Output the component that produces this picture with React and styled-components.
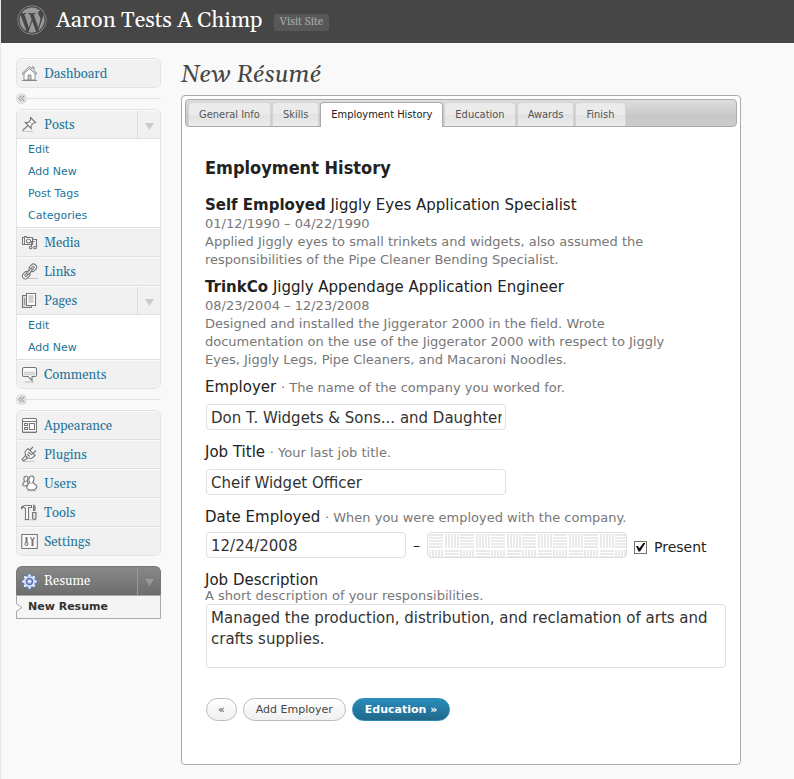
import React from "react";
import styled, { createGlobalStyle, css } from "styled-components";
import { FaWordpress } from "react-icons/fa";

const sans = `"DejaVu Sans", Verdana, sans-serif`;
const condensed = `"DejaVu Sans Condensed", "DejaVu Sans", sans-serif`;
const serif = `Gelasio, Georgia, "Liberation Serif", serif`;

const GlobalStyle = createGlobalStyle`
  * { box-sizing: border-box; }
  body { margin: 0; background: #f9f9f9; color: #333; font-family: ${sans}; font-size: 13px; }
  h1, h2, h3, p, ul { margin: 0; padding: 0; }
  ul { list-style: none; }
  a { text-decoration: none; }
`;

const Page = styled.div`
  min-height: 100vh;
  border-left: 1px solid #e9e6e1;
`;

const Header = styled.header`
  display: flex;
  align-items: center;
  height: 43px;
  padding: 0 16px 3px;
  background: #464646;
`;

const Logo = styled(FaWordpress)`
  width: 30px;
  height: 30px;
  color: #999;
  flex: none;
`;

const SiteTitle = styled.h1`
  margin-left: 9px;
  padding-top: 2px;
  color: #fff;
  font: 400 22px/30px ${serif};
`;

const VisitSite = styled.a`
  margin: 5px 0 0 11px;
  padding: 0 6px;
  border-radius: 3px;
  background: #585858;
  color: #aaa;
  font: 400 11px/17px ${serif};
`;

const Body = styled.div`
  display: flex;
  align-items: flex-start;
  gap: 20px;
  padding: 15px 53px 16px 15px;
`;

const Sidebar = styled.nav`
  flex: 0 0 145px;
`;

const Group = styled.ul`
  border: 1px solid #e3e3e3;
  border-radius: 6px;
  overflow: hidden;
`;

const CurrentGroup = styled.div`
  margin-top: 10px;
`;

const MenuItem = styled.li`
  border-bottom: 1px solid #dfdfdf;
  &:last-child { border-bottom: 0; }
`;

const MenuRow = styled.div`
  display: flex;
  align-items: stretch;
  height: 28px;
  background: #f1f1f1;
  border-top: 1px solid #fafafa;
  ${(p) => p.$current && css`
    height: 29px;
    border: 1px solid #777;
    border-bottom: 0;
    border-radius: 6px 6px 0 0;
    background: linear-gradient(#888, #6d6d6d);
  `}
`;

const MenuLink = styled.a`
  flex: 1;
  display: flex;
  align-items: center;
  gap: 6px;
  padding-left: 4px;
  color: ${(p) => (p.$current ? "#fff" : "#21759b")};
  font: 400 13px/20px ${serif};
  svg { flex: none; }
`;

const Toggle = styled.button`
  width: 23px;
  padding: 3px 0 0;
  border: 0;
  border-left: 1px solid ${(p) => (p.$current ? "#999" : "#dfdfdf")};
  background: transparent;
  color: ${(p) => (p.$current ? "#999" : "#ccc")};
  line-height: 0;
`;

const Submenu = styled.ul`
  border-top: 1px solid #dfdfdf;
  background: #fff;
  ${(p) => p.$current && css`
    border: 1px solid #aaa;
    background: #f5f5f5;
  `}
`;

const SubLink = styled.a`
  display: block;
  padding-left: 11px;
  color: ${(p) => (p.$current ? "#333" : "#21759b")};
  font: ${(p) => (p.$current ? 700 : 400)} 11px/22px ${sans};
`;

const CurrentItem = styled.li`
  display: flex;
  align-items: center;
  svg { margin-left: -1px; margin-right: -6px; }
`;

const Separator = styled.div`
  display: flex;
  align-items: center;
  height: 21px;
  &::after { content: ""; flex: 1; height: 1px; background: #e3e3e3; }
`;

const Fold = styled.button`
  width: 11px;
  height: 11px;
  padding: 0;
  border: 0;
  border-radius: 50%;
  background: #e1e1e1;
  line-height: 0;
`;

const Main = styled.main`
  flex: 1;
  min-width: 0;
`;

const PageTitle = styled.h2`
  color: #464646;
  font: italic 400 24px/32px ${serif};
  padding-top: 1px;
  margin-bottom: 4px;
`;

const Panel = styled.section`
  min-height: 668px;
  padding: 3px;
  border: 1px solid #aaa;
  border-radius: 4px;
  background: #fff;
`;

const TabBar = styled.div`
  display: flex;
  align-items: stretch;
  gap: 1px;
  height: 28px;
  padding: 2px 2px 0;
  border: 1px solid #aaa;
  border-radius: 4px;
  background: linear-gradient(#dedede, #c8c8c8 60%, #ccc);
`;

const Tab = styled.button`
  padding: 0 10px;
  border: 1px solid #d3d3d3;
  border-bottom: 0;
  border-radius: 4px 4px 0 0;
  background: linear-gradient(#ebebeb 50%, #e2e2e2 50%, #ececec);
  color: #555;
  font: 400 11px/22px ${condensed};
  white-space: nowrap;
  ${(p) => p.$active && css`
    margin-bottom: -1px;
    padding-bottom: 1px;
    border-color: #aaa;
    background: #fff;
    color: #212121;
  `}
`;

const Form = styled.form`
  padding: 29px 10px 40px 20px;
`;

const FormTitle = styled.h3`
  color: #222;
  font: 700 18px/24px ${condensed};
  margin-bottom: 15px;
`;

const Job = styled.div`
  max-width: 485px;
  margin-bottom: 8px;
`;

const JobTitle = styled.p`
  color: #222;
  font-size: 15px;
  line-height: 20px;
`;

const JobText = styled.p`
  color: #777;
  font-size: 13px;
  line-height: 18px;
`;

const Field = styled.div`
  margin-bottom: ${(p) => (p.$last ? 0 : 12)}px;
`;

const Label = styled.label`
  display: block;
  margin-bottom: ${(p) => p.$space || 7}px;
  color: #222;
  font-size: 15px;
  line-height: 20px;
`;

const Hint = styled.span`
  color: #777;
  font-size: 13px;
  line-height: 12px;
`;

const HintLine = styled(Hint)`
  display: block;
`;

const box = css`
  border: 1px solid #dfdfdf;
  border-radius: 4px;
  color: #333;
  background: #fff;
  font-family: ${sans};
  font-size: 15px;
`;

const tile = encodeURIComponent(
  `<svg xmlns="http://www.w3.org/2000/svg" width="31" height="31"><g fill="#eaeaea">` +
    [0, 3, 6, 9, 12].map((n) =>
      `<path d="M0 ${n}h14v2H0zM16 ${n + 16}h14v2H16zM${n + 16} 0h2v14h-2zM${n} 16h2v14h-2z"/>`
    ).join("") +
    `</g></svg>`
);

const TextInput = styled.input`
  ${box}
  display: block;
  width: ${(p) => p.$width}px;
  max-width: 100%;
  height: 26px;
  margin: ${(p) => p.$margin || "0 0 0 1px"};
  padding: 1px 3px 0 4px;
  &:disabled { background: #fff url("data:image/svg+xml,${tile}") 1px 1px; }
`;

const TextArea = styled.textarea`
  ${box}
  display: block;
  width: 100%;
  max-width: 520px;
  height: 64px;
  margin-left: 1px;
  padding: 3px 4px;
  line-height: 21px;
  resize: none;
`;

const DateRow = styled.div`
  display: flex;
  align-items: center;
  gap: 7px;
  color: #222;
  font-size: 14px;
`;

const Check = styled.label`
  display: flex;
  align-items: center;
  gap: 7px;
  padding-top: 4px;
`;

const CheckBox = styled.input`
  appearance: none;
  width: 13px;
  height: 13px;
  margin: 0;
  border: 1px solid #7b6f66;
  background: #fff;
  &:checked::after {
    content: "";
    display: block;
    width: 9px;
    height: 9px;
    margin: 1px;
    background: #111;
    clip-path: polygon(0 38%, 22% 38%, 38% 65%, 85% 0, 100% 0, 100% 15%, 45% 100%, 28% 100%);
  }
`;

const Actions = styled.div`
  display: flex;
  gap: 6px;
  padding: 30px 0 0 1px;
`;

const Button = styled.button`
  height: 23px;
  padding: 0 ${(p) => (p.$compact ? 11 : 12)}px;
  border: 1px solid #bbb;
  border-radius: 12px;
  background: linear-gradient(#fff, #f0f0f0);
  color: #464646;
  font: 400 11px/20px ${sans};
  ${(p) => p.$primary && css`
    border-color: #298cba;
    background: linear-gradient(#298cba, #21678a);
    color: #fff;
    font-weight: 700;
  `}
`;

const icons = {
  home: <><path fill="#fff" strokeWidth=".8" d="M3 8v7h11V8L8.500 3z" /><path fill="#e8e8e8" strokeWidth=".8" d="M1 8.500 8.500 1.500l2.500 2.300V2h2v3.700l3 2.800-1 .9-6.500-5.700L2 9.400z" /><path fill="#ccc" strokeWidth=".8" d="M7 15v-5h3v5z" /><path d="M1 15.500h15" strokeWidth=".8" /></>,
  pin: <><path fill="#fff" d="m9.500 1.500 5 5-2 .5-2.500 3 .2 2.500-6-6 2.800.2 2.500-2.700z" /><path d="M8.500 5.500l2 2.500" opacity=".5" /><path d="M7 9.500 1.500 14.500" /><path d="M1 15.500h11" opacity=".35" /></>,
  media: <><path fill="#fff" d="M1.500 3.500h2v-1h2v1h6v7h-10z" /><path d="M3.500 3.500v7" /><circle cx="7.500" cy="7" r="2" /><path d="M11.500 5.500h4v8M10.500 13V7.500h3" /><circle cx="9.700" cy="13.500" r="1.300" fill="#fff" /><circle cx="14" cy="13.500" r="1.300" fill="#fff" /></>,
  link: <><g transform="rotate(-48 8.500 8.500)"><rect x="-.5" y="5.500" width="8" height="6" rx="3" fill="#fff" /><rect x="9.500" y="5.500" width="8" height="6" rx="3" fill="#fff" /><rect x="2" y="7.500" width="3.500" height="2" rx="1" /><rect x="11.500" y="7.500" width="3.500" height="2" rx="1" /><rect x="5" y="7.300" width="7" height="2.400" rx="1.200" fill="#ddd" /></g><path d="M7 15.500h10" opacity=".35" /></>,
  pages: <><path fill="#ddd" d="M5 3.500H1.500v12h9V13" /><path fill="#fff" d="M5.500 1.500h9v12h-9z" /><path d="M7.500 4h5M7.500 6h5M7.500 8h5M7.500 10h5M3.500 6v7" strokeWidth=".7" /></>,
  comment: <><path fill="#fafafa" d="M3 1.500h11q1.500 0 1.500 1.500v6q0 1.500-1.500 1.500h-3v4l-4-4H3Q1.500 10.500 1.500 9V3Q1.500 1.500 3 1.500z" /><path d="M3 6.500h11M3 8.500h11" stroke="#ccc" strokeWidth="1.500" /><path d="M4 16h9" opacity=".5" /></>,
  appearance: <><rect x="1.500" y="1.500" width="14" height="14" rx="1" fill="#fff" /><path d="M1.500 4.500h14M3.500 6.500h3v2h-3zM3.500 10.500h3v2h-3zM8.500 6.500h5v6h-5z" /><path d="M2 14.500h13" opacity=".4" /></>,
  plug: <><path fill="#fff" d="M4.500 9.500 4 6l3-3.500 7 7L10.500 12.500 7 12z" /><path d="M8.500 4.500 12 1M11.500 8 15 4.500M4.500 9.500l2 2.500-4 3-1.500-1.500zM7 6l4 3M6 8l3 2.500" /><path d="M3 15.500h11" opacity=".35" /></>,
  users: <><path fill="#f4f4f4" d="M4 1.500q2.500-1 3 1.500 0 2-1 3l1.500 3.500q-2 2-5 1.300-2-1.300 1-4.300-1.500-3.500.5-5z" /><path fill="#fff" d="M9 1.500q3-1.500 4 1.500 0 3-1.200 4.500l3.700 3q1 2.500-1.500 3.700-4 1.500-7 0-2-1.500-.5-4L8.500 7.500Q7 3.500 9 1.500z" /><path d="M8.500 7.500q1.500 1.500 3.300 0M3.500 6q1 1 2.500 0M6 15.800h9" opacity=".5" /></>,
  tools: <><path fill="#fff" d="M.5 4.500V3Q2 1.500 4.500 1.500h6v2h-3v12h-3v-11L2.500 3z" /><path fill="#bbb" d="M12.500 6.500V3L13 1.200l1 1.300v4z" /><path fill="#ddd" d="M11.500 8.500h3.500v5q0 2-1.700 2t-1.800-2z" /><path d="M3 15.800h13" opacity=".35" /></>,
  settings: <><path fill="#fafafa" d="M.8 1.500h15.500v14H.8z" /><path d="M5.500 4v6M11.500 7v6" strokeWidth="2" /><circle cx="5.500" cy="11" r="1.500" fill="#fff" /><path d="M10 4v1.500l1.500 1.500L13 5.500V4" /></>,
};

const Icon = ({ name }) => (
  <svg width="17" height="17" viewBox="0 0 17 17" fill="none" stroke="#777" strokeWidth="1.100" aria-hidden="true">
    {icons[name]}
  </svg>
);

const Gear = () => (
  <svg width="17" height="17" viewBox="0 0 17 17" aria-hidden="true">
    <g fill="#dce7fb" stroke="#4c66b0" strokeWidth=".7">
      {[0, 45, 90, 135, 180, 225, 270, 315].map((a) => (
        <path key={a} d="M6.500 3.500 7.200.8h2.600l.7 2.700z" transform={`rotate(${a} 8.500 8.500)`} />
      ))}
    </g>
    <circle cx="8.500" cy="8.500" r="5.600" fill="#d5e1f8" />
    <circle cx="8.500" cy="8.500" r="3.200" fill="#93a9de" stroke="#405aa5" />
    <circle cx="8.500" cy="8.500" r="1.300" fill="#fff" />
  </svg>
);

const Triangle = () => (
  <svg width="9" height="7" viewBox="0 0 9 7" aria-hidden="true"><path d="M0 0h9L4.500 7z" fill="currentColor" /></svg>
);

const Chevrons = () => (
  <svg width="7" height="7" viewBox="0 0 7 7" fill="none" stroke="#888" aria-hidden="true"><path d="M3.500.8 1 3.500l2.500 2.700M6.300.8 3.800 3.500l2.500 2.700" /></svg>
);

const Pointer = () => (
  <svg width="7" height="9" viewBox="0 0 7 9" aria-hidden="true"><path d="M0 .5 6 4.500 0 8.500" fill="#f9f9f9" stroke="#aaa" /></svg>
);

const groups = [
  [{ label: "Dashboard", icon: "home" }],
  [
    { label: "Posts", icon: "pin", sub: ["Edit", "Add New", "Post Tags", "Categories"] },
    { label: "Media", icon: "media" },
    { label: "Links", icon: "link" },
    { label: "Pages", icon: "pages", sub: ["Edit", "Add New"] },
    { label: "Comments", icon: "comment" },
  ],
  [
    { label: "Appearance", icon: "appearance" },
    { label: "Plugins", icon: "plug" },
    { label: "Users", icon: "users" },
    { label: "Tools", icon: "tools" },
    { label: "Settings", icon: "settings" },
  ],
];

const tabs = ["General Info", "Skills", "Employment History", "Education", "Awards", "Finish"];

const jobs = [
  {
    company: "Self Employed",
    title: "Jiggly Eyes Application Specialist",
    dates: "01/12/1990 – 04/22/1990",
    text: "Applied Jiggly eyes to small trinkets and widgets, also assumed the responsibilities of the Pipe Cleaner Bending Specialist.",
  },
  {
    company: "TrinkCo",
    title: "Jiggly Appendage Application Engineer",
    dates: "08/23/2004 – 12/23/2008",
    text: "Designed and installed the Jiggerator 2000 in the field. Wrote documentation on the use of the Jiggerator 2000 with respect to Jiggly Eyes, Jiggly Legs, Pipe Cleaners, and Macaroni Noodles.",
  },
];

function Menu({ items }) {
  return (
    <Group>
      {items.map((item) => (
        <MenuItem key={item.label}>
          <MenuRow>
            <MenuLink href="#"><Icon name={item.icon} />{item.label}</MenuLink>
            {item.sub && <Toggle type="button" aria-label={`Toggle ${item.label}`}><Triangle /></Toggle>}
          </MenuRow>
          {item.sub && (
            <Submenu>
              {item.sub.map((s) => <li key={s}><SubLink href="#">{s}</SubLink></li>)}
            </Submenu>
          )}
        </MenuItem>
      ))}
    </Group>
  );
}

export default function App() {
  return (
    <Page>
      <GlobalStyle />
      <Header>
        <Logo aria-hidden="true" />
        <SiteTitle>Aaron Tests A Chimp</SiteTitle>
        <VisitSite href="#">Visit Site</VisitSite>
      </Header>
      <Body>
        <Sidebar aria-label="Admin menu">
          {groups.map((items, i) => (
            <React.Fragment key={items[0].label}>
              {i > 0 && <Separator><Fold type="button" aria-label="Collapse menu"><Chevrons /></Fold></Separator>}
              <Menu items={items} />
            </React.Fragment>
          ))}
          <CurrentGroup>
            <MenuRow $current>
              <MenuLink href="#" $current><Gear />Resume</MenuLink>
              <Toggle type="button" $current aria-label="Toggle Resume"><Triangle /></Toggle>
            </MenuRow>
            <Submenu $current>
              <CurrentItem><Pointer /><SubLink href="#" $current>New Resume</SubLink></CurrentItem>
            </Submenu>
          </CurrentGroup>
        </Sidebar>
        <Main>
          <PageTitle>New Résumé</PageTitle>
          <Panel>
            <TabBar role="tablist">
              {tabs.map((t) => (
                <Tab key={t} type="button" role="tab" aria-selected={t === "Employment History"} $active={t === "Employment History"}>{t}</Tab>
              ))}
            </TabBar>
            <Form onSubmit={(e) => e.preventDefault()}>
              <FormTitle>Employment History</FormTitle>
              {jobs.map((j) => (
                <Job key={j.company}>
                  <JobTitle><b>{j.company}</b> {j.title}</JobTitle>
                  <JobText>{j.dates}</JobText>
                  <JobText>{j.text}</JobText>
                </Job>
              ))}
              <Field>
                <Label htmlFor="employer">Employer <Hint>· The name of the company you worked for.</Hint></Label>
                <TextInput id="employer" $width={300} defaultValue="Don T. Widgets & Sons... and Daughters" />
              </Field>
              <Field>
                <Label htmlFor="title">Job Title <Hint>· Your last job title.</Hint></Label>
                <TextInput id="title" $width={300} defaultValue="Cheif Widget Officer" />
              </Field>
              <Field>
                <Label htmlFor="from" $space={5}>Date Employed <Hint>· When you were employed with the company.</Hint></Label>
                <DateRow>
                  <TextInput id="from" $width={200} defaultValue="12/24/2008" />
                  <span>–</span>
                  <TextInput $width={200} $margin="0" disabled aria-label="End date" />
                  <Check><CheckBox type="checkbox" defaultChecked />Present</Check>
                </DateRow>
              </Field>
              <Field $last>
                <Label htmlFor="description" $space={2}>Job Description <HintLine>A short description of your responsibilities.</HintLine></Label>
                <TextArea id="description" defaultValue="Managed the production, distribution, and reclamation of arts and crafts supplies." />
              </Field>
              <Actions>
                <Button type="button" $compact aria-label="Previous">«</Button>
                <Button type="button">Add Employer</Button>
                <Button type="submit" $primary>Education »</Button>
              </Actions>
            </Form>
          </Panel>
        </Main>
      </Body>
    </Page>
  );
}
